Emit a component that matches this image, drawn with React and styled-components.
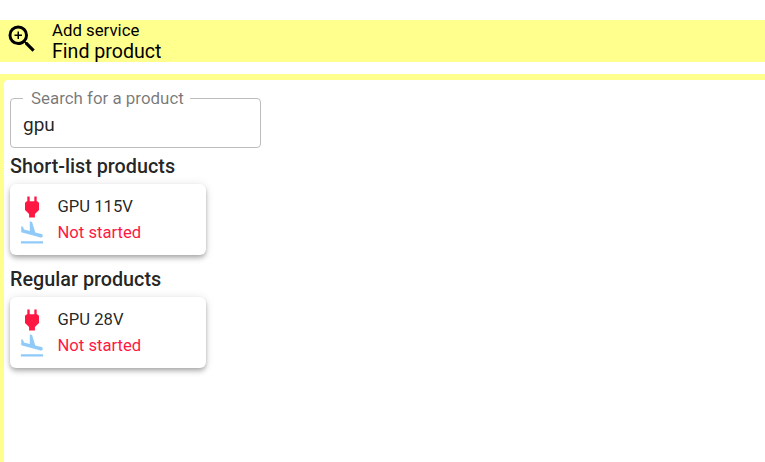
import styled, {createGlobalStyle} from "styled-components"
import {MdZoomIn, MdPower, MdFlightLand} from "react-icons/md"

const GlobalStyle = createGlobalStyle`
	html, body {
		margin: 0;
		height: 100%;
		background: #fff;
		font-family: Roboto, "Liberation Sans", sans-serif;
		overflow: hidden;
	}
`
const Page = styled.div`
	padding-top: 20px;
	height: 462px;
	box-sizing: border-box;
	display: flex;
	flex-direction: column;
`
const Header = styled.header`
	display: flex;
	align-items: center;
	height: 42px;
	background: #ffff8d;
`
const HeaderIcon = styled.div`
	width: 52px;
	padding-left: 4px;
	box-sizing: border-box;
	display: flex;
	color: #000;
	margin-top: -5px;
`
const HeaderText = styled.div`
	color: #000;
`
const Overline = styled.div`
	font-size: 16.8px;
	line-height: 20px;
`
const HeaderTitle = styled.div`
	font-size: 19.6px;
	line-height: 21px;
	margin-top: 1px;
	font-weight: 400;
`
const Panel = styled.main`
	flex: 1;
	margin-top: 12px;
	background: #ffff8d;
	padding: 6px 0 0 4px;
	display: flex;
`
const Content = styled.div`
	flex: 1;
	background: #fff;
	border-radius: 4px 0 0 0;
	padding: 10px 6px;
`
const Field = styled.fieldset`
	width: 251px;
	height: 59px;
	box-sizing: border-box;
	margin: -1px 0 0;
	padding: 0 12px;
	border: 1px solid #bdbdbd;
	border-radius: 4px;
`
const Legend = styled.legend`
	font-size: 16.9px;
	line-height: 18px;
	color: rgba(0, 0, 0, 0.54);
	padding: 0 6px 0 8px;
	margin-left: 0;
`
const Value = styled.input`
	display: block;
	border: 0;
	outline: 0;
	padding: 0;
	margin: 6px 0 0;
	width: 100%;
	background: transparent;
	font-family: inherit;
	font-size: 19px;
	line-height: 24px;
	color: rgba(0, 0, 0, 0.87);
`
const SectionTitle = styled.h2`
	margin: 7px 0 5px;
	font-size: 19.8px;
	line-height: 24px;
	font-weight: 500;
	color: rgba(0, 0, 0, 0.87);
`
const Card = styled.div`
	width: 196px;
	height: 71px;
	box-sizing: border-box;
	margin-bottom: 13px;
	padding: 10px 0 0 8px;
	background: #fff;
	border-radius: 6px;
	box-shadow: 0 2px 4px -1px rgba(0, 0, 0, 0.2), 0 4px 5px 0 rgba(0, 0, 0, 0.14), 0 1px 10px 0 rgba(0, 0, 0, 0.12);
`
const CardRow = styled.div`
	display: flex;
	align-items: center;
	height: 26px;
`
const CardIcon = styled.div`
	width: 39.5px;
	display: flex;
	color: ${p => p.color};
`
const CardText = styled.div`
	font-size: 16.65px;
	line-height: 24px;
	color: ${p => p.color || "rgba(0, 0, 0, 0.87)"};
`

function ProductCard({name}) {
	return (
		<Card>
			<CardRow>
				<CardIcon color="#ff1744"><MdPower size={28} /></CardIcon>
				<CardText>{name}</CardText>
			</CardRow>
			<CardRow>
				<CardIcon color="#90caf9"><MdFlightLand size={28} /></CardIcon>
				<CardText color="#ff1744">Not started</CardText>
			</CardRow>
		</Card>
	)
}

export default function App() {
	return (
		<Page>
			<GlobalStyle />
			<Header>
				<HeaderIcon><MdZoomIn size={36} /></HeaderIcon>
				<HeaderText>
					<Overline>Add service</Overline>
					<HeaderTitle>Find product</HeaderTitle>
				</HeaderText>
			</Header>
			<Panel>
				<Content>
					<Field>
						<Legend>Search for a product</Legend>
						<Value defaultValue="gpu" readOnly />
					</Field>
					<SectionTitle>Short-list products</SectionTitle>
					<ProductCard name="GPU 115V" />
					<SectionTitle>Regular products</SectionTitle>
					<ProductCard name="GPU 28V" />
				</Content>
			</Panel>
		</Page>
	)
}
